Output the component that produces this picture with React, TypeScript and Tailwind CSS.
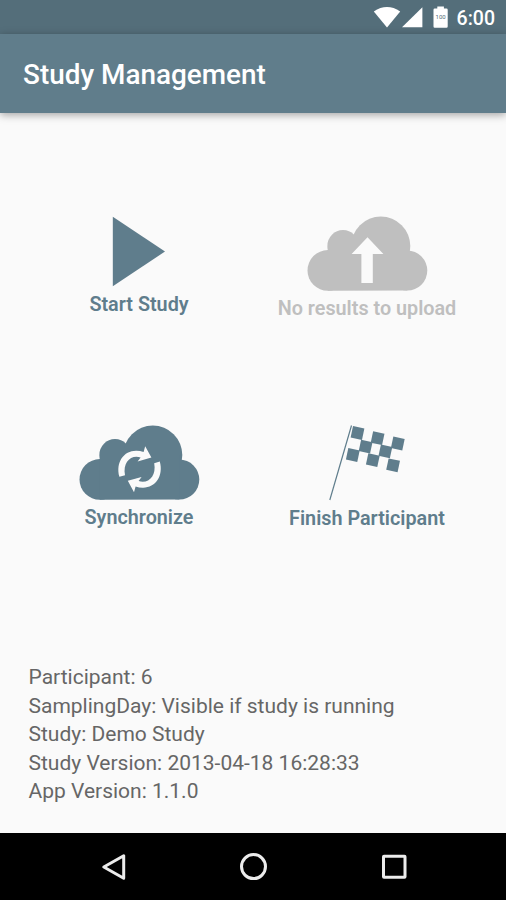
import type { ReactNode } from "react";

const studyInfo = [
  "Participant: 6",
  "SamplingDay: Visible if study is running",
  "Study: Demo Study",
  "Study Version: 2013-04-18 16:28:33",
  "App Version: 1.1.0",
];

const flagSquares = [
  [28.5, 8],
  [48.6, 13.2],
  [68.8, 18.5],
  [36.6, 21.6],
  [56.4, 26.4],
  [23.8, 30],
  [43.8, 35.1],
  [64.1, 40.3],
];

function StatusBar() {
  return (
    <div className="flex h-[34px] items-center justify-end bg-[#546e7a] pr-[11px] text-white">
      <svg viewBox="0 0 75 22" className="mr-[9px] h-[22px] w-[75px]" fill="currentColor">
        <path d="M0.8 5.5Q14 -3.3 27.2 5.5L14 21.6Z" />
        <path d="M49.4 1.2V21.2H29Z" />
        <path d="M64.3 0.6h6.6v2h2.6q1.2 0 1.2 1.2v16.8q0 1.2-1.2 1.2H61.7q-1.2 0-1.2-1.2V3.8q0-1.2 1.2-1.2h2.6Z" />
        <text x="67.6" y="13" textAnchor="middle" className="fill-[#546e7a] font-[Roboto] text-[6px]">
          100
        </text>
      </svg>
      <span className="pt-[3px] text-[19.5px] leading-none font-medium">6:00</span>
    </div>
  );
}

function Cloud({ children }: { children: ReactNode }) {
  return (
    <svg viewBox="0 0 121 75" className="h-[75px] w-[121px]" fill="currentColor">
      <circle cx="20.8" cy="54.4" r="20.3" />
      <circle cx="36" cy="29.7" r="15.6" />
      <circle cx="73.8" cy="30" r="29.5" />
      <circle cx="100.3" cy="54.6" r="20" />
      <path d="M20.8 30H100.3V74.6L20.8 74.7Z" />
      {children}
    </svg>
  );
}

function PlayIcon() {
  return (
    <svg viewBox="0 0 54 71" className="h-[71px] w-[54px]" fill="currentColor">
      <path d="M0.8 0.8L53 35.5L0.8 70.3Z" />
    </svg>
  );
}

function UploadIcon() {
  return (
    <Cloud>
      <path d="M60.5 21.2L76.4 38H65.8V67H54.4V38H44.6Z" fill="#fafafa" />
    </Cloud>
  );
}

function SyncArrow() {
  return (
    <path d="M40.4 51.8C36.4 37 45 25.4 57.5 25.7Q61 25.8 64.6 27L66.2 21.2L72.4 32.6L58.6 36.4L61.6 32.4C52 29.3 43.6 37 46 50.2Z" />
  );
}

function SyncIcon() {
  return (
    <Cloud>
      <g fill="#fafafa">
        <SyncArrow />
        <g transform="rotate(180 60.6 44.2)">
          <SyncArrow />
        </g>
      </g>
    </Cloud>
  );
}

function FlagIcon() {
  return (
    <svg viewBox="0 0 76 76" className="h-[76px] w-[76px]" fill="currentColor">
      <path d="M22.5 0.5L0.8 75" stroke="currentColor" strokeWidth="1.2" />
      {flagSquares.map(([x, y]) => (
        <rect
          key={`${x}-${y}`}
          x={x - 5.8}
          y={y - 5.8}
          width="11.6"
          height="11.6"
          transform={`rotate(12 ${x} ${y})`}
        />
      ))}
    </svg>
  );
}

function Tile({ icon, label, disabled }: { icon: ReactNode; label: string; disabled?: boolean }) {
  return (
    <button
      type="button"
      disabled={disabled}
      className={`flex flex-col items-center ${disabled ? "text-[#bfbfbf]" : "text-[#5f7d8c]"}`}
    >
      {icon}
      <span className="mt-1.5 text-[19.8px] leading-[23px] font-semibold whitespace-nowrap">{label}</span>
    </button>
  );
}

function NavBar() {
  return (
    <nav className="flex h-[67px] items-center justify-center gap-[112px] bg-black pl-[2px] text-[#ececec]">
      <svg viewBox="0 0 28 28" className="size-7" fill="none" stroke="currentColor" strokeWidth="3">
        <path d="M23.7 2.8V25.2L3.8 14Z" strokeLinejoin="round" />
      </svg>
      <svg viewBox="0 0 28 28" className="size-7" fill="none" stroke="currentColor" strokeWidth="3">
        <circle cx="13.5" cy="13.6" r="12" />
      </svg>
      <svg viewBox="0 0 28 28" className="size-7" fill="none" stroke="currentColor" strokeWidth="3">
        <rect x="3.5" y="3.3" width="21.5" height="21" rx="0.5" />
      </svg>
    </nav>
  );
}

export default function App() {
  return (
    <div className="flex h-[900px] w-[506px] flex-col overflow-hidden bg-[#fafafa] font-[Roboto,sans-serif]">
      <StatusBar />
      <header className="flex h-[79px] items-center bg-[#607d8b] pl-[23px] shadow-[0_2px_8px_rgba(0,0,0,0.35)]">
        <h1 className="pt-[3px] text-[27.9px] leading-8 font-medium text-white">Study Management</h1>
      </header>

      <main className="flex flex-1 flex-col">
        <div className="grid grid-cols-2 grid-rows-[209px_auto] items-start px-[25px] pt-[103px]">
          <Tile icon={<PlayIcon />} label="Start Study" />
          <Tile icon={<UploadIcon />} label="No results to upload" disabled />
          <Tile icon={<SyncIcon />} label="Synchronize" />
          <Tile icon={<FlagIcon />} label="Finish Participant" />
        </div>
        <div className="mt-auto mb-[27px] pl-[28.5px] text-[21px] leading-[28.6px] text-[#666]">
          {studyInfo.map((line) => (
            <p key={line}>{line}</p>
          ))}
        </div>
      </main>

      <NavBar />
    </div>
  );
}
